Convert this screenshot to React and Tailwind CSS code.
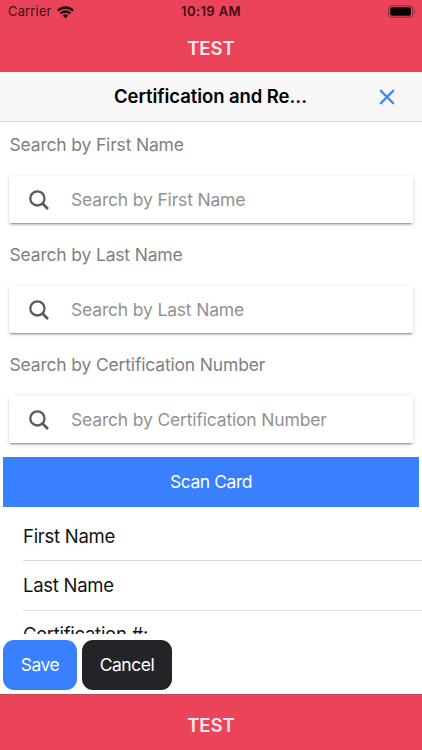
function StatusBar() {
  return (
    <div className="flex h-6 items-center justify-between pl-2 pr-1.5 text-[#3d0d14]">
      <div className="flex w-32 items-center gap-[5px]">
        <span className="text-[13px] tracking-[0.15px]">Carrier</span>
        <svg width="17" height="13" viewBox="0 0 17 13" fill="none" stroke="#1c0508" strokeWidth="2.4">
          <path d="M.9 4.6a10.7 10.7 0 0 1 15.2 0" />
          <path d="M3.6 7.5a6.9 6.9 0 0 1 9.8 0" />
          <path d="M8.5 12.3 5.8 9.7a3.8 3.8 0 0 1 5.4 0Z" fill="#1c0508" stroke="none" />
        </svg>
      </div>
      <span className="-ml-[2px] text-[13px] font-semibold tracking-[0.4px]">10:19 AM</span>
      <div className="flex w-32 justify-end">
        <svg className="-mt-px" width="28" height="13" viewBox="0 0 28 13">
          <rect x="0.7" y="0.7" width="24" height="11.6" rx="3.2" fill="none" stroke="#8c2937" strokeWidth="1.1" />
          <rect x="2.3" y="2.2" width="20.6" height="8.6" rx="1.8" fill="#080102" />
          <path d="M26.2 4.5v4c1.6-.6 1.6-3.4 0-4Z" fill="#8c2937" />
        </svg>
      </div>
    </div>
  )
}

function SearchField({ label }) {
  return (
    <div className="h-[110px] px-[9px] pt-[11px]">
      <label className="block h-6 pl-[0.5px] text-[17.5px] leading-6 tracking-[-0.17px] text-[#808080]">{label}</label>
      <div className="mt-[19px] flex h-[47px] items-center rounded-[2px] bg-white pl-5 shadow-[0_3px_1px_-2px_rgba(0,0,0,0.2),0_2px_2px_0_rgba(0,0,0,0.14),0_1px_5px_0_rgba(0,0,0,0.12)]">
        <svg width="20" height="20" viewBox="0 0 20 20" fill="none" stroke="#5b5b5b" strokeWidth="2.3">
          <circle cx="8.4" cy="8.4" r="7.1" />
          <path d="m13.2 13.2 5.8 5.8" strokeWidth="2.7" />
        </svg>
        <span className="ml-[22px] pt-px text-[17.5px] tracking-[-0.17px] text-[#929292]">{label}</span>
      </div>
    </div>
  )
}

export default function App() {
  return (
    <div className="flex h-[750px] w-[422px] flex-col overflow-hidden bg-white font-['Inter',sans-serif]">
      <header className="h-[72px] shrink-0 bg-[#eb445a]">
        <StatusBar />
        <h1 className="h-12 text-center text-[18.5px] leading-[48px] font-semibold text-[#ffe9ed]">TEST</h1>
      </header>

      <div className="flex h-[50px] shrink-0 items-center border-b border-[#dadada] bg-[#f7f7f7]">
        <h2 className="ml-[114px] w-[195px] pt-px text-[18.5px] font-semibold tracking-[-0.07px] whitespace-nowrap text-black">Certification and Re...</h2>
        <svg className="ml-[70px]" width="16" height="16" viewBox="0 0 16 16" stroke="#3880ff" strokeWidth="2.3" strokeLinecap="round">
          <path d="m1.8 1.8 12.4 12.4M14.2 1.8 1.8 14.2" />
        </svg>
      </div>

      <main className="h-[512px] shrink-0 overflow-hidden">
        <SearchField label="Search by First Name" />
        <SearchField label="Search by Last Name" />
        <SearchField label="Search by Certification Number" />
        <div className="px-[3px] pt-[5px]">
          <button className="h-[50px] w-full bg-[#3880ff] text-[17.5px] tracking-[-0.45px] text-white">Scan Card</button>
        </div>
        <ul className="pl-[23px] text-[18.5px] leading-[49px] tracking-[-0.27px] text-[#111]">
          <li className="h-[54px] border-b border-[#dedede] pt-[5px]">First Name</li>
          <li className="h-[50px] border-b border-[#dedede]">Last Name</li>
          <li className="leading-[47px]">Certification #:</li>
        </ul>
      </main>

      <div className="flex h-[60px] shrink-0 gap-[5px] pt-[6px] pl-[3px] text-[17.5px] tracking-[-0.45px] text-white">
        <button className="h-[50px] w-[74px] rounded-[11px] bg-[#3880ff] pt-px">Save</button>
        <button className="h-[50px] w-[90px] rounded-[11px] bg-[#222428] pt-px">Cancel</button>
      </div>

      <footer className="flex-1 border-t border-[#c9475a] bg-[#eb445a] text-center text-[18.5px] leading-[60px] font-semibold text-[#ffe9ed]">TEST</footer>
    </div>
  )
}
